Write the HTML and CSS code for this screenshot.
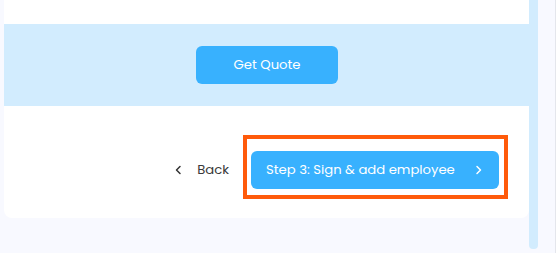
FILE: index.html
```html
<!DOCTYPE html>
<html>
<head>
<meta charset="utf-8">
<link rel="stylesheet" href="styles.css">
</head>
<body>
<div class="page">
  <div class="card">
    <div class="top"></div>
    <div class="band">
      <button class="btn quote">Get Quote</button>
    </div>
    <div class="footer">
      <button class="back">
        <svg width="7" height="10" viewBox="0 0 7 10"><polyline points="5,1.5 1.5,5 5,8.5" fill="none" stroke="#333" stroke-width="1.5" stroke-linecap="round" stroke-linejoin="round"/></svg>
        <span>Back</span>
      </button>
      <button class="btn next">
        <span>Step 3: Sign &amp; add employee</span>
        <svg width="7" height="10" viewBox="0 0 7 10"><polyline points="2,1.5 5.5,5 2,8.5" fill="none" stroke="#fff" stroke-width="1.5" stroke-linecap="round" stroke-linejoin="round"/></svg>
      </button>
    </div>
    <div class="highlight"></div>
  </div>
  <div class="strip"></div>
  <div class="gutter"></div>
</div>
</body>
</html>
```
FILE: styles.css
```css
* { box-sizing: border-box; }
html, body { margin: 0; padding: 0; }
body {
  background: #f8f9ff;
  font-family: "Poppins", "Inter", "Noto Sans", sans-serif;
  width: 560px;
  height: 253px;
  overflow: hidden;
}
.page {
  display: flex;
  align-items: flex-start;
  padding-left: 4px;
  height: 253px;
}
.card {
  position: relative;
  width: 525px;
  background: #fff;
  border-radius: 0 0 8px 8px;
}
.top { height: 24px; }
.band {
  height: 82px;
  background: #d2ecfe;
  display: flex;
  align-items: center;
  justify-content: center;
}
.btn {
  border: none;
  background: #38b1fe;
  color: #fff;
  font-family: inherit;
  font-size: 13.2px;
  border-radius: 6px;
  height: 38px;
  cursor: pointer;
}
.quote { width: 142px; margin-left: 1px; }
.footer {
  height: 112px;
  display: flex;
  justify-content: flex-end;
  align-items: flex-start;
  padding: 45px 30px 0 0;
}
.back {
  border: none;
  background: none;
  height: 38px;
  display: flex;
  align-items: center;
  gap: 15px;
  font-family: inherit;
  font-size: 13.2px;
  color: #3a3a3a;
  padding: 0;
  margin-right: 22px;
}
.next {
  width: 248px;
  display: flex;
  align-items: center;
  justify-content: space-between;
  padding: 0 17px 0 15px;
}
.highlight {
  position: absolute;
  left: 239px;
  top: 135px;
  width: 265px;
  height: 64px;
  border: 4px solid #ff5a0a;
  pointer-events: none;
}
.strip {
  width: 9px;
  height: 249px;
  background: #d2ecfe;
  border-radius: 0 0 4px 4px;
}
.gutter {
  flex: 1;
  height: 253px;
  border-right: 4px solid #fff;
  position: relative;
}
.gutter::after {
  content: "";
  position: absolute;
  right: 0;
  top: 0;
  width: 1px;
  height: 253px;
  background: #e4e6ec;
}
```
